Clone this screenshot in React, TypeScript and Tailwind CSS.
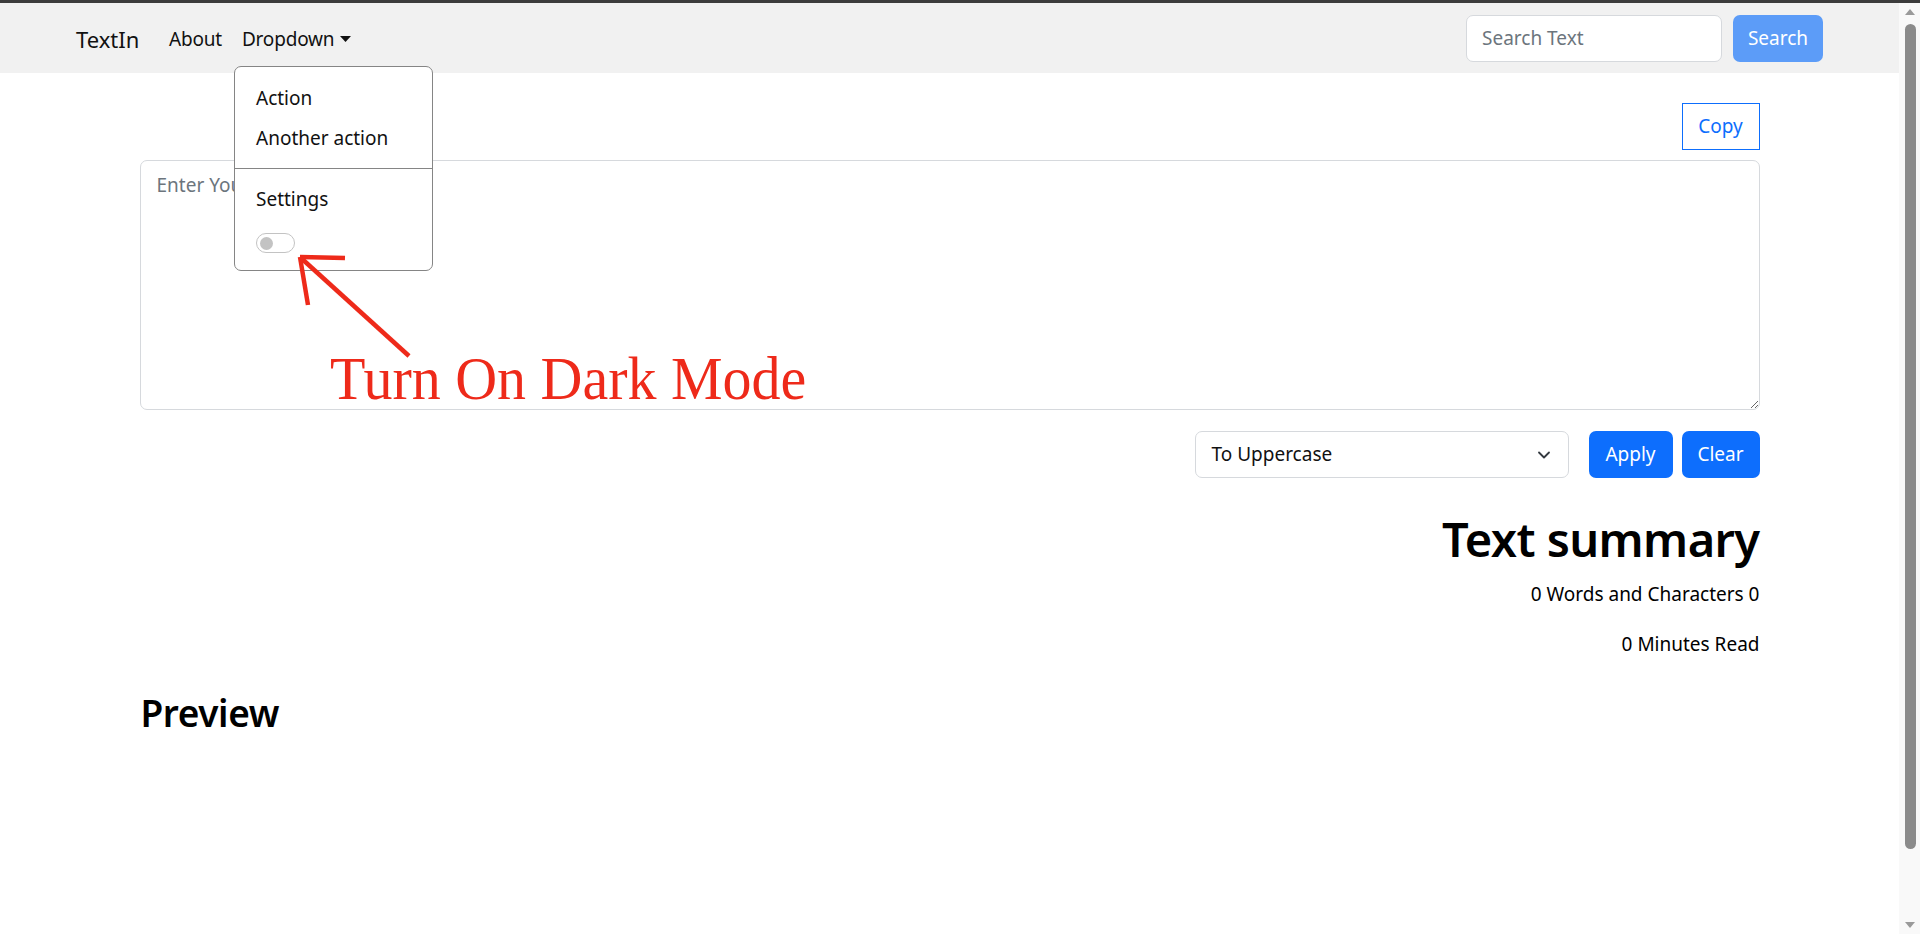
import React from "react";
import { ChevronDown } from "lucide-react";

const font = { fontFamily: '"Noto Sans", "Open Sans", Arial, sans-serif' };

export default function App() {
  return (
    <div
      className="w-[1920px] h-[934px] overflow-hidden flex flex-col bg-white text-[#212529]"
      style={font}
    >
      <div className="h-[3px] bg-[#3c3c3c] shrink-0" />
      <div className="flex flex-1 min-h-0">
        {/* page column */}
        <div className="relative flex-1 flex flex-col">
          {/* navbar */}
          <nav className="h-[70px] bg-[#f1f1f1] flex items-center pl-[76px] pr-[76px] shrink-0">
            <span className="w-[63px] text-[22px] text-[#111] leading-none pt-[2px]">TextIn</span>
            <div className="ml-[20px] flex items-center text-[19px] text-[#111] pt-[2px]">
              <span className="px-[10px] tracking-[-0.2px]">About</span>
              <span className="px-[10px] flex items-center tracking-[-0.2px]">
                Dropdown
                <svg width="11" height="6" viewBox="0 0 11 6" className="ml-[6px]">
                  <path d="M0 0 L11 0 L5.5 6 Z" fill="#111" />
                </svg>
              </span>
            </div>
            <div className="ml-auto flex items-center gap-[11px]">
              <div className="w-[256px] h-[47px] bg-white border border-[#d6d9dd] rounded-[7px] flex items-center pl-[15px] text-[19px] text-[#6c757d]">
                Search Text
              </div>
              <div className="w-[90px] h-[47px] rounded-[7px] bg-[#5c9cf8] text-white text-[19px] flex items-center justify-center">
                Search
              </div>
            </div>
          </nav>

          {/* main container */}
          <main className="w-[1620px] mx-auto flex flex-col">
            <div className="flex justify-end mt-[30px]">
              <div className="w-[78px] h-[47px] border border-[#0d6efd] text-[#0d6efd] text-[19px] flex items-center justify-center">
                Copy
              </div>
            </div>
            <textarea
              className="mt-[10px] h-[250px] w-full border border-[#d6d9dd] rounded-[7px] px-[16px] py-[10px] text-[19px] placeholder:text-[#6c757d] outline-none resize-y"
              placeholder="Enter Your Text Here"
              style={font}
            />
            <div className="flex justify-end items-center mt-[21px]">
              <div className="w-[374px] h-[47px] border border-[#d6d9dd] rounded-[7px] flex items-center justify-between pl-[16px] pr-[14px] text-[19px] text-[#111]">
                <span>To Uppercase</span>
                <ChevronDown size={20} strokeWidth={2.2} color="#343a40" />
              </div>
              <div className="ml-[20px] w-[84px] h-[47px] rounded-[7px] bg-[#0d6efd] text-white text-[19px] flex items-center justify-center">
                Apply
              </div>
              <div className="ml-[9px] w-[78px] h-[47px] rounded-[7px] bg-[#0d6efd] text-white text-[19px] flex items-center justify-center">
                Clear
              </div>
            </div>
            <div className="flex flex-col items-end">
              <h1 className="mt-[32px] text-[47px] leading-[58px] font-semibold tracking-[-0.6px] text-black">
                Text summary
              </h1>
              <p className="mt-[11px] text-[19px] leading-[30px] text-black">
                0 Words and Characters 0
              </p>
              <p className="mt-[20px] text-[19px] leading-[30px] text-black">
                0 Minutes Read
              </p>
            </div>
            <h2 className="mt-[31px] text-[37px] leading-[46px] font-semibold tracking-[-0.4px] text-black pl-[1px]">
              Preview
            </h2>
          </main>

          {/* dropdown menu */}
          <div className="absolute left-[234px] top-[63px] w-[199px] h-[205px] bg-white border border-[#858585] rounded-[7px] pt-[11px] pb-[10px] text-[19px] text-[#111]">
            <div className="h-[40px] flex items-center pl-[21px]">Action</div>
            <div className="h-[40px] flex items-center pl-[21px]">Another action</div>
            <div className="my-[10px] h-px bg-[#858585]" />
            <div className="h-[40px] flex items-center pl-[21px]">Settings</div>
            <div className="pl-[21px] mt-[14px]">
              <div className="w-[39px] h-[20px] rounded-full border border-[#c3c3c3] flex items-center pl-[3px]">
                <div className="w-[13px] h-[13px] rounded-full bg-[#c3c3c3]" />
              </div>
            </div>
          </div>

          {/* annotation arrow */}
          <svg
            className="absolute left-0 top-0 pointer-events-none"
            width="500"
            height="400"
            viewBox="0 -3 500 400"
          >
            <g stroke="#ee2a1a" strokeWidth="4.5" strokeLinecap="butt" fill="none">
              <line x1="409" y1="350" x2="301" y2="252" />
              <line x1="300" y1="251" x2="345" y2="252" />
              <line x1="300" y1="251" x2="308" y2="299" />
            </g>
          </svg>
          <div
            className="absolute left-[330px] top-[348px] text-[58px] leading-[60px] text-[#ee2a1a] whitespace-nowrap origin-bottom scale-y-[1.07]"
            style={{ fontFamily: '"Liberation Serif", "Times New Roman", serif' }}
          >
            Turn On Dark Mode
          </div>
        </div>

        {/* scrollbar */}
        <div className="w-[21px] bg-[#f9f9f9] flex flex-col items-center shrink-0">
          <svg width="10" height="6" viewBox="0 0 10 6" className="mt-[6px]">
            <path d="M0 6 L5 0 L10 6 Z" fill="#9a9a9a" />
          </svg>
          <div className="mt-[9px] w-[11px] h-[825px] rounded-full bg-[#8b8b8b] ml-[1px]" />
          <div className="flex-1" />
          <svg width="10" height="6" viewBox="0 0 10 6" className="mb-[6px]">
            <path d="M0 0 L10 0 L5 6 Z" fill="#9a9a9a" />
          </svg>
        </div>
      </div>
    </div>
  );
}
